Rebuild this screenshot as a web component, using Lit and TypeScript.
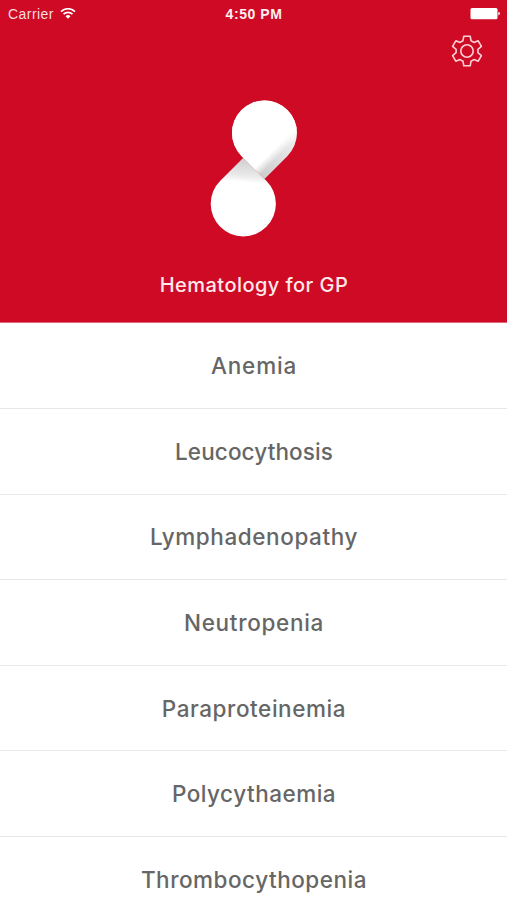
import { LitElement, html, css } from "lit";
import { customElement } from "lit/decorators.js";

interface Topic {
  name: string;
  spacing: number;
}

const topics: Topic[] = [
  { name: "Anemia", spacing: 0.85 },
  { name: "Leucocythosis", spacing: 0.1 },
  { name: "Lymphadenopathy", spacing: 0.58 },
  { name: "Neutropenia", spacing: 0.7 },
  { name: "Paraproteinemia", spacing: 0.57 },
  { name: "Polycythaemia", spacing: 0.5 },
  { name: "Thrombocythopenia", spacing: 0.52 },
];

@customElement("status-bar")
class StatusBar extends LitElement {
  static styles = css`
    :host {
      display: grid;
      grid-template-columns: 1fr auto 1fr;
      align-items: center;
      height: 27px;
      padding: 0 7px 0 8px;
      box-sizing: border-box;
      color: #fff;
      font: 14px/27px "Liberation Sans", Arial, sans-serif;
    }
    .carrier {
      display: flex;
      align-items: center;
      gap: 6px;
      letter-spacing: 0.45px;
      color: #fbdde0;
    }
    .label,
    .time {
      padding-top: 1px;
    }
    .time {
      font-weight: bold;
      letter-spacing: 0.55px;
      color: #fff0f1;
    }
    .battery {
      justify-self: end;
    }
    svg {
      display: block;
    }
  `;

  render() {
    return html`
      <div class="carrier">
        <span class="label">Carrier</span>
        <svg width="16" height="12" viewBox="0 0 16 12" fill="none" stroke="#fff" stroke-width="1.7">
          <path d="M1 3.6A10 10 0 0 1 15 3.6" />
          <path d="M3.5 6.2A6.4 6.4 0 0 1 12.5 6.2" />
          <path d="M8 10.8L5.5 8.2A3.5 3.5 0 0 1 10.5 8.2Z" fill="#fff" stroke="none" />
        </svg>
      </div>
      <div class="time">4:50 PM</div>
      <svg class="battery" width="30" height="12" viewBox="0 0 30 12">
        <rect x="0.5" y="0" width="27" height="11.3" rx="1.5" fill="#fff" />
        <path d="M28.3 3.8Q30 4.3 30 5.6T28.3 7.4Z" fill="#fff" />
      </svg>
    `;
  }
}

@customElement("app-root")
class AppRoot extends LitElement {
  static styles = css`
    :host {
      display: block;
      height: 900px;
      overflow: hidden;
      background: #fff;
      font-family: Inter, "Open Sans", sans-serif;
    }
    .hero {
      display: flex;
      flex-direction: column;
      height: 323px;
      box-sizing: border-box;
      background: #ce0a24;
      border-bottom: 1px solid #e0667a;
    }
    .tools {
      display: flex;
      justify-content: flex-end;
      padding: 7px 23px 0 0;
    }
    .tools svg,
    .logo {
      display: block;
    }
    .logo {
      align-self: center;
      margin-top: 31px;
    }
    .title {
      margin: 35px 0 0;
      padding-left: 1px;
      text-align: center;
      color: #ffe9eb;
      font-size: 20px;
      font-weight: 500;
      line-height: 27px;
      letter-spacing: 0.45px;
    }
    .list {
      margin: 0;
      padding: 0.5px 0 0;
      list-style: none;
    }
    .row {
      display: flex;
      align-items: center;
      justify-content: center;
      height: 85.6px;
      padding: 0 0 0 1px;
      box-sizing: border-box;
      border-bottom: 1px solid #e8e8e8;
      color: #666;
      font-size: 22.5px;
      font-weight: 500;
    }
  `;

  render() {
    return html`
      <header class="hero">
        <status-bar></status-bar>
        <div class="tools">
          <svg width="34" height="34" viewBox="-17 -17 34 34" fill="none" stroke="#ffd3d8" stroke-width="1.6" stroke-linejoin="round">
            <circle r="6.2" />
            <path d="M-3.2 -14.8H3.2L4 -10.3L6.9 -8.6L11.2 -10.2L14.4 -4.6L10.9 -1.7V1.7L14.4 4.6L11.2 10.2L6.9 8.6L4 10.3L3.2 14.8H-3.2L-4 10.3L-6.9 8.6L-11.2 10.2L-14.4 4.6L-10.9 1.7V-1.7L-14.4 -4.6L-11.2 -10.2L-6.9 -8.6L-4 -10.3Z" />
          </svg>
        </div>
        <svg class="logo" width="87" height="138" viewBox="210 99 87 138">
          <defs>
            <linearGradient id="upper" gradientUnits="userSpaceOnUse" x1="294" y1="136" x2="262" y2="178">
              <stop offset="0" stop-color="#f2f2f2" />
              <stop offset="0.3" stop-color="#e4e4e4" />
              <stop offset="1" stop-color="#cdcdcd" />
            </linearGradient>
            <linearGradient id="edge" gradientUnits="userSpaceOnUse" x1="270" y1="153" x2="276" y2="159">
              <stop offset="0" stop-color="#fff" />
              <stop offset="1" stop-color="#fff" stop-opacity="0" />
            </linearGradient>
            <linearGradient id="lower" gradientUnits="userSpaceOnUse" x1="244" y1="158" x2="242" y2="182">
              <stop offset="0" stop-color="#cdcdcd" />
              <stop offset="0.75" stop-color="#ebebeb" />
              <stop offset="1" stop-color="#fff" />
            </linearGradient>
          </defs>
          <path d="M243.3 157.7L220.3 180.7A32.6 32.6 0 1 0 266.3 180.7Z" fill="url(#lower)" />
          <path d="M264.5 179L241.4 155.9A32.5 32.5 0 1 1 287.5 155.9Z" fill="url(#upper)" />
          <path d="M264.5 179L241.4 155.9A32.5 32.5 0 1 1 287.5 155.9Z" fill="url(#edge)" />
        </svg>
        <h1 class="title">Hematology for GP</h1>
      </header>
      <ul class="list">
        ${topics.map(
          (t) => html`<li class="row"><span style="letter-spacing:${t.spacing}px">${t.name}</span></li>`
        )}
      </ul>
    `;
  }
}
